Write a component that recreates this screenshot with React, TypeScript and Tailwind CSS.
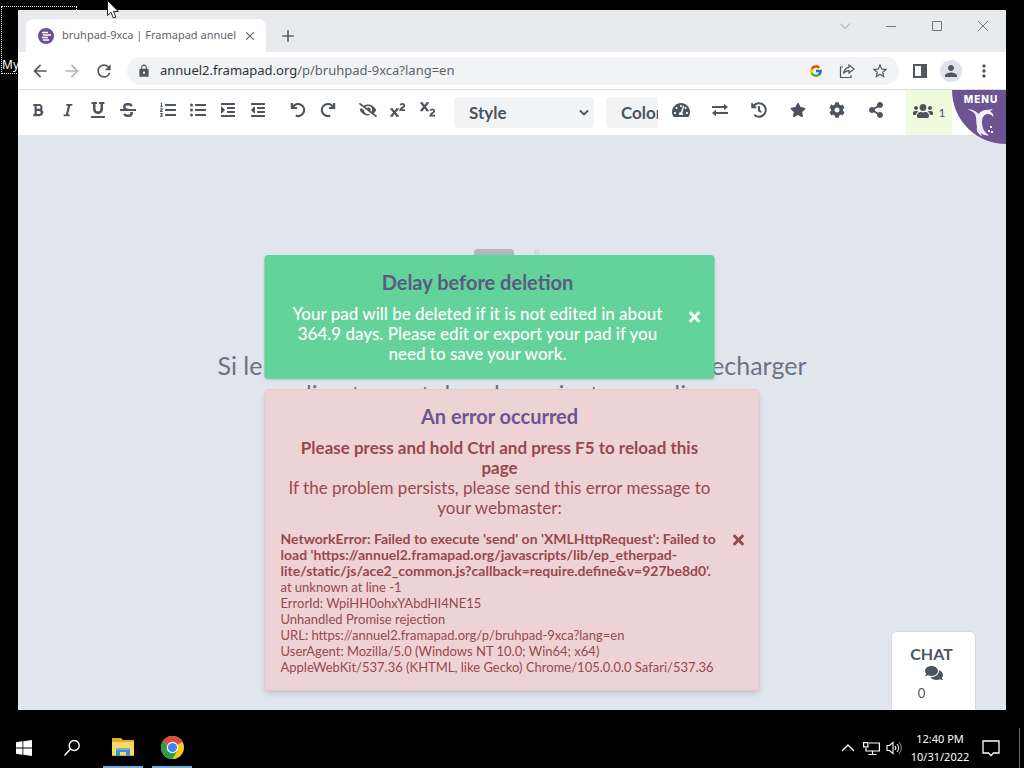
import React from "react";
import {
  FaBold, FaItalic, FaUnderline, FaStrikethrough, FaListOl, FaListUl, FaIndent, FaOutdent,
  FaEyeSlash, FaTachometerAlt, FaHistory, FaStar, FaCog,
  FaShareAlt, FaUsers, FaComments, FaTimes,
} from "react-icons/fa";
import { MdLock, MdPerson, MdStarBorder, MdMoreVert, MdRefresh, MdArrowBack, MdArrowForward, MdAdd, MdClose } from "react-icons/md";
import { FcGoogle } from "react-icons/fc";

function TurnIcon({ flip = false }: { flip?: boolean }) {
  return (
    <svg viewBox="0 0 16 16" className={flip ? "size-4 -scale-x-100" : "size-4"} fill="none" stroke="currentColor" strokeWidth="2.2">
      <path d="M3.2 4.6A6 6 0 1 1 5.8 13.6" />
      <path d="M1.9 1v5h5.2" />
    </svg>
  );
}

function SwapIcon() {
  return (
    <svg viewBox="0 0 16 16" className="size-4" fill="currentColor">
      <path d="M0 4h12V1.800L16 5l-4 3.200V6H0zM16 10H4V7.800L0 11l4 3.200V12h12z" />
    </svg>
  );
}

function ScriptIcon({ low = false }: { low?: boolean }) {
  return (
    <svg viewBox="0 0 16 16" className={low ? "size-4 -translate-y-px" : "size-4"} fill="none" stroke="currentColor">
      <path d={low ? "M1.500 2l6 7.500M7.500 2l-6 7.500" : "M1.500 7l6 7M7.500 7l-6 7"} strokeWidth="2.200" />
      <path d={low ? "M.3 2h2.500M6.300 2h2.500M.3 9.500h2.500M6.300 9.500h2.500" : "M.3 7h2.500M6.300 7h2.500M.3 14h2.500M6.300 14h2.500"} strokeWidth="1.400" />
      <path d={low ? "M10.300 9.500c.8-1.500 4-1.500 4 .4 0 1.700-3.500 2.600-4 4.700H15" : "M10.300 3c.8-1.500 4-1.500 4 .4 0 1.700-3.500 2.600-4 4.700H15"} strokeWidth="1.800" />
    </svg>
  );
}

type Tool = { label: string; icon: React.ReactNode };

const formatGroups: Tool[][] = [
  [
    { label: "Bold", icon: <FaBold className="size-[14px]" /> },
    { label: "Italic", icon: <FaItalic className="size-[14px]" /> },
    { label: "Underline", icon: <FaUnderline /> },
    { label: "Strikethrough", icon: <FaStrikethrough /> },
  ],
  [
    { label: "Ordered list", icon: <FaListOl /> },
    { label: "Unordered list", icon: <FaListUl /> },
    { label: "Indent", icon: <FaIndent /> },
    { label: "Outdent", icon: <FaOutdent /> },
  ],
  [
    { label: "Undo", icon: <TurnIcon /> },
    { label: "Redo", icon: <TurnIcon flip /> },
  ],
  [
    { label: "Clear authorship colors", icon: <FaEyeSlash className="size-[18px]" /> },
    { label: "Superscript", icon: <ScriptIcon /> },
    { label: "Subscript", icon: <ScriptIcon low /> },
  ],
];

const padTools: Tool[] = [
  { label: "Statistics", icon: <FaTachometerAlt className="size-[18px]" /> },
  { label: "Import and export", icon: <SwapIcon /> },
  { label: "History", icon: <FaHistory /> },
  { label: "Save revision", icon: <FaStar /> },
  { label: "Settings", icon: <FaCog /> },
  { label: "Share", icon: <FaShareAlt /> },
];

function TabStrip() {
  return (
    <header className="flex h-[42px] items-end bg-[#e8eaed] pl-2 text-[#5f6368]">
      <div className="flex h-[33px] w-[240px] items-center rounded-t-lg bg-white pr-[9px] pl-3">
        <svg viewBox="0 0 16 16" className="size-4 shrink-0">
          <circle cx="8" cy="8" r="8" fill="#6a5194" />
          <path d="M4 4.500h6M5 7h8M4 9.500h6M5 12h6" stroke="#fff" strokeWidth="1.300" />
        </svg>
        <span className="ml-2 flex-1 whitespace-nowrap text-[11px]">bruhpad-9xca | Framapad annuel</span>
        <button aria-label="Close tab"><MdClose className="size-[14px]" /></button>
      </div>
      <button aria-label="New tab" className="mb-[6px] ml-3"><MdAdd className="size-5" /></button>
      <div className="mb-[18px] ml-auto flex items-center gap-[30px] pr-[15px] text-[#777]">
        <button aria-label="Search tabs"><svg viewBox="0 0 16 16" className="size-4" fill="none" stroke="#999"><path d="M3 5.500l5 5 5-5" /></svg></button>
        <button aria-label="Minimize"><svg viewBox="0 0 16 16" className="size-4" fill="none" stroke="currentColor"><path d="M3 8.500h10" /></svg></button>
        <button aria-label="Maximize"><svg viewBox="0 0 16 16" className="size-4" fill="none" stroke="currentColor"><path d="M3.500 3.500h9v9h-9z" /></svg></button>
        <button aria-label="Close"><svg viewBox="0 0 16 16" className="size-4" fill="none" stroke="currentColor"><path d="M3 3l10 10M13 3L3 13" /></svg></button>
      </div>
    </header>
  );
}

function AddressBar() {
  return (
    <div className="flex h-[38px] items-center border-b border-[#dadce0] bg-white text-[#54585d]">
      <div className="flex w-[109px] items-center gap-3 pl-3">
        <button aria-label="Back"><MdArrowBack className="size-5" /></button>
        <button aria-label="Forward"><MdArrowForward className="size-5 text-[#b5b7ba]" /></button>
        <button aria-label="Reload"><MdRefresh className="size-5" /></button>
      </div>
      <div className="flex h-7 flex-1 items-center rounded-full bg-[#f1f3f4] pl-[10px] pr-[10px]">
        <MdLock className="size-[14px]" />
        <a href="#pad" className="ml-[9px] flex-1 text-[13px] text-[#5f6368]">
          <span className="text-[#303134]">annuel2.framapad.org</span>/p/bruhpad-9xca?lang=en
        </a>
        <div className="flex items-center gap-4">
          <button aria-label="Google"><FcGoogle className="size-[14px]" /></button>
          <button aria-label="Share page">
            <svg viewBox="0 0 16 16" className="size-4" fill="none" stroke="currentColor" strokeWidth="1.200">
              <path d="M4 4H1.500v10.500H12V12M10 2l5 4-5 4V7.700C7.500 7.700 5.800 8.500 4.500 10.500 5 7 7 4.600 10 4.300z" />
            </svg>
          </button>
          <button aria-label="Bookmark"><MdStarBorder className="size-[18px]" /></button>
        </div>
      </div>
      <div className="flex items-center gap-3 pl-[13px] pr-3">
        <button aria-label="Side panel">
          <svg viewBox="0 0 16 16" className="size-4"><path d="M2 2h12v12H2z" fill="none" stroke="currentColor" strokeWidth="2" /><path d="M9 2h5v12H9z" fill="currentColor" /></svg>
        </button>
        <button aria-label="Profile" className="flex size-[22px] items-center justify-center rounded-full bg-[#dfe2ea]"><MdPerson className="size-[18px]" /></button>
        <button aria-label="Browser menu"><MdMoreVert className="size-5" /></button>
      </div>
    </div>
  );
}

function EditorBar() {
  return (
    <div className="relative z-10 flex h-[45px] items-center bg-white font-['Lato',sans-serif] text-[#4d545e]">
      <div className="flex gap-[10px] pl-[5px]">
        {formatGroups.map((group) => (
          <div key={group[0].label} className="flex">
            {group.map((t) => (
              <button key={t.label} aria-label={t.label} className="flex h-10 w-[30px] items-center justify-center pb-[6px] text-[16px]">{t.icon}</button>
            ))}
          </div>
        ))}
      </div>
      <div className="relative ml-[11px] h-[31px] w-[140px] rounded bg-[#f2f3f4]">
        <select aria-label="Style" className="h-full w-full appearance-none bg-transparent pl-[15px] text-[17px] font-bold">
          <option>Style</option>
        </select>
        <svg viewBox="0 0 12 12" className="pointer-events-none absolute right-1 top-[10px] size-3" fill="none" stroke="currentColor" strokeWidth="1.800"><path d="M2 3.500l4 4 4-4" /></svg>
      </div>
      <select aria-label="Color" className="ml-3 h-[31px] w-[52px] appearance-none overflow-hidden rounded-l bg-[#f2f3f4] pl-[15px] text-[17px] font-bold text-clip">
        <option>Color</option>
      </select>
      <div className="ml-auto flex">
        {padTools.map((t) => (
          <button key={t.label} aria-label={t.label} className="flex h-10 w-[39px] items-center justify-center pb-[6px] text-[16px]">{t.icon}</button>
        ))}
      </div>
      <button aria-label="Users" className="ml-[11px] mr-[54px] flex h-full w-[46px] items-center justify-center gap-[6px] bg-[#effbdc] text-[12px]">
        <FaUsers className="mb-1 size-5" />
        <span>1</span>
      </button>
      <button className="absolute right-0 top-0 flex size-[54px] flex-col items-center rounded-bl-full bg-[#6d5391] pl-1 pt-[2px] font-['Inter',sans-serif] text-[10px] leading-[14px] font-extrabold tracking-widest text-white">
        MENU
        <svg viewBox="0 0 28 32" className="h-8 w-7" fill="#f5eefa">
          <path d="M0 3c5 0 9 2 11.500 5C14 5 17 3.500 20 4l6-1-3 2.500c2.500 1 3.500 3 3.500 5.500-2-2.500-4-3.500-6.500-3-4 1-5.500 5-5 10 .5 5 3 9 7 11.500C15 30 10.500 25 9.500 18 9 13.500 9.500 11 8 8 6 5.500 3 4 0 3z" />
          <path d="M10 21c-1 3 1 7 5 9-1-2-2-5-2-8z" />
          <path d="M23 20h2v2h-2zM21 24h2v2h-2zM24 25h2v2h-2z" />
        </svg>
      </button>
    </div>
  );
}

function Notices() {
  return (
    <div className="absolute left-1/2 top-[120px] flex w-[495px] -translate-x-1/2 flex-col items-start gap-[10px] text-center text-[17px] leading-5">
      <section className="flex w-[450px] items-center rounded bg-[#64d29b] py-[15px] text-white shadow-sm">
        <div className="flex-1 whitespace-nowrap pl-4">
          <h2 className="mb-[10px] text-[20px] leading-6 font-bold text-[#575c82]">Delay before deletion</h2>
          <p className="font-medium">
            Your pad will be deleted if it is not edited in about<br />
            364.9 days. Please edit or export your pad if you<br />
            need to save your work.
          </p>
        </div>
        <button aria-label="Dismiss" className="flex w-[40px] justify-center"><FaTimes className="size-4" /></button>
      </section>
      <section className="flex w-full items-center rounded border border-[#e6c8cc] bg-[#eed3d4] pt-[14px] pb-[15px] text-[#99484f] shadow-md">
        <div className="flex-1 whitespace-nowrap pl-[15px]">
          <h2 className="mb-[10px] text-[20px] leading-6 font-bold text-[#6d5391]">An error occurred</h2>
          <p>
            <b>Please press and hold Ctrl and press F5 to reload this<br />page</b><br />
            If the problem persists, please send this error message to<br />
            your webmaster:
          </p>
          <p className="mt-[13px] text-left text-[13px] leading-4">
            <b className="text-[14px]">
              NetworkError: Failed to execute 'send' on 'XMLHttpRequest': Failed to<br />
              load 'https://annuel2.framapad.org/javascripts/lib/ep_etherpad-<br />
              lite/static/js/ace2_common.js?callback=require.define&amp;v=927be8d0'.
            </b><br />
            at unknown at line -1<br />
            ErrorId: WpiHH0ohxYAbdHI4NE15<br />
            Unhandled Promise rejection<br />
            URL: https://annuel2.framapad.org/p/bruhpad-9xca?lang=en<br />
            UserAgent: Mozilla/5.0 (Windows NT 10.0; Win64; x64)<br />
            AppleWebKit/537.36 (KHTML, like Gecko) Chrome/105.0.0.0 Safari/537.36
          </p>
        </div>
        <button aria-label="Dismiss" className="flex w-[40px] justify-center"><FaTimes className="size-4" /></button>
      </section>
    </div>
  );
}

function PadBody() {
  return (
    <main className="relative flex flex-1 justify-center bg-[#e1e6ee] font-['Lato',sans-serif]">
      <div className="flex w-[589px] flex-col pt-[114px] text-[#6b7384]">
        <div className="flex h-[102px] justify-center gap-5 pr-[10px]">
          <span className="h-7 w-10 rounded-t bg-[#b3b7bb]" />
          <span className="size-[6px] rounded-full bg-[#d6dae0]" />
        </div>
        <p className="flex justify-between text-[25px] leading-[29px]"><span>Si le</span><span>telecharger</span></p>
        <p className="text-center text-[25px] leading-[29px]">directement dans le navigateur en ligne</p>
      </div>
      <Notices />
      <button className="absolute bottom-0 right-[30px] flex h-[79px] w-[85px] flex-col items-center rounded-t-md border border-b-0 border-[#d5dae2] bg-white pt-3 pr-1 text-[#4d545e]">
        <span className="text-[16px] leading-5 font-bold">CHAT</span>
        <FaComments className="ml-1 size-[18px]" />
        <span className="mr-5 mt-[3px] text-[13px] leading-4">0</span>
      </button>
    </main>
  );
}

function Taskbar() {
  return (
    <footer className="flex h-10 items-center text-[11px] leading-[18px] text-white">
      <button aria-label="Start" className="flex w-12 justify-center">
        <svg viewBox="0 0 16 16" className="size-4" fill="#fff"><path d="M0 2.200l6.500-.9v6.200H0zM7.300 1.200L16 0v7.500H7.300zM0 8.400h6.500v6.300L0 13.800zM7.300 8.400H16V16l-8.700-1.200z" /></svg>
      </button>
      <button aria-label="Search" className="flex w-12 justify-center">
        <svg viewBox="0 0 16 16" className="size-4" fill="none" stroke="#fff" strokeWidth="1.400"><circle cx="10.200" cy="5.500" r="5" /><path d="M6.500 9L.5 15.500" /></svg>
      </button>
      <div className="flex gap-[9px] pl-[7px]">
        <button aria-label="File Explorer" className="flex h-10 w-10 items-center justify-center border-b-2 border-[#76a9de]">
          <svg viewBox="0 0 22 20" className="h-5 w-[22px]"><path d="M0 1h9l2 2h11v16H0z" fill="#e5a92e" /><path d="M0 5h22v13H0z" fill="#fbd766" /><path d="M4 11h14v8h-4v-4H8v4H4z" fill="#3e8fcc" /><path d="M4 11h14v2H4z" fill="#67b1de" /></svg>
        </button>
        <button aria-label="Chrome" className="flex h-10 w-10 items-center justify-center border-b-2 border-[#76a9de]">
          <svg viewBox="0 0 24 24" className="size-[23px]"><circle cx="12" cy="12" r="12" fill="#fbc916" /><path d="M12 12L1.600 6A12 12 0 0 1 22.400 6z" fill="#dd4b3e" /><path d="M1.600 6A12 12 0 0 0 12 24l5.200-9L12 12z" fill="#2b9b50" /><circle cx="12" cy="12" r="6" fill="#fff" /><circle cx="12" cy="12" r="4.800" fill="#4285f4" /></svg>
        </button>
      </div>
      <div className="ml-auto flex items-center">
        <button aria-label="Hidden icons"><svg viewBox="0 0 14 14" className="size-[14px]" fill="none" stroke="#fff" strokeWidth="1.400"><path d="M1 10l6-6 6 6" /></svg></button>
        <button aria-label="Network" className="ml-2">
          <svg viewBox="0 0 17 16" className="h-4 w-[17px]" fill="none" stroke="#fff" strokeWidth="1.200"><path d="M6 3h10.400v8H3V8M9.500 11v3.500M5.500 14.500h8M.6 2.600h4.300v4.300H.6z" /></svg>
        </button>
        <button aria-label="Volume" className="ml-[6px]">
          <svg viewBox="0 0 16 16" className="size-4" fill="none" stroke="#fff" strokeWidth="1.100"><path d="M1 5.500h2.500L7 2.500v11l-3.500-3H1zM9 6a3 3 0 0 1 0 4M11 4a6 6 0 0 1 0 8" /><path d="M13 2a9 9 0 0 1 0 12" stroke="#888" /></svg>
        </button>
        <time className="ml-2 w-[60px] whitespace-nowrap text-center">12:40 PM<br />10/31/2022</time>
        <button aria-label="Notifications" className="ml-3">
          <svg viewBox="0 0 18 18" className="size-[18px]" fill="none" stroke="#fff" strokeWidth="1.300"><path d="M1 2h16v12h-5.500L9 16.500 6.500 14H1z" /></svg>
        </button>
        <span className="ml-[19px] mr-1 h-10 w-px bg-[#666]" />
      </div>
    </footer>
  );
}

export default function App() {
  return (
    <div className="relative flex min-h-screen flex-col gap-[18px] overflow-hidden bg-black pt-[10px] font-['Noto_Sans',sans-serif]">
      <div className="absolute left-[1px] top-[6px] flex h-[68px] w-[76px] items-end border border-dotted border-white text-[12px] leading-4 text-white">My PC</div>
      <div className="relative mx-[18px] flex flex-1 flex-col">
        <TabStrip />
        <AddressBar />
        <EditorBar />
        <PadBody />
      </div>
      <Taskbar />
      <svg viewBox="0 0 12 19" className="absolute left-[107px] top-0 h-[19px] w-3"><path d="M.5.5v15l3.500-3.200 2.400 5.700 2.400-1-2.300-5.500h4.800z" fill="#fff" stroke="#222" /></svg>
    </div>
  );
}
